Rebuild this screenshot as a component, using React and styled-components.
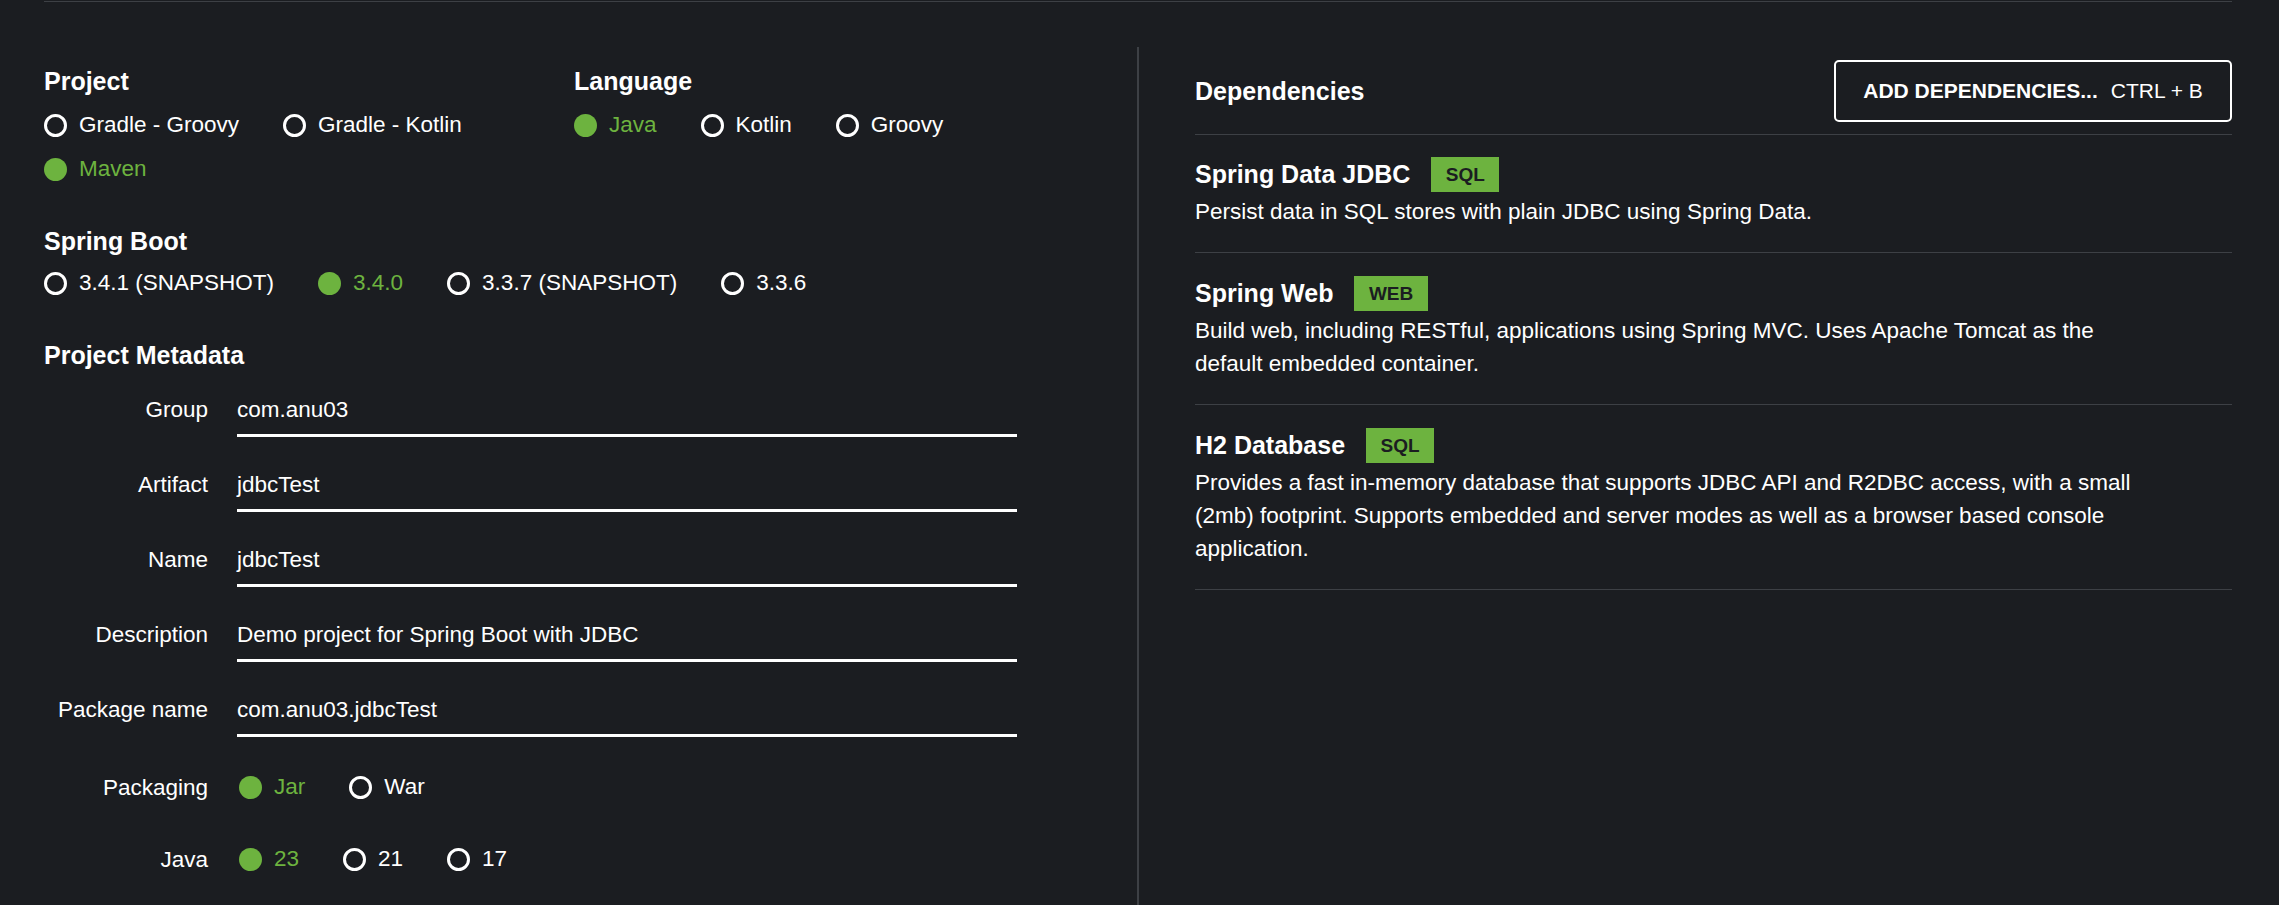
import styled, { createGlobalStyle } from "styled-components";

const GlobalStyle = createGlobalStyle`
  html, body {
    margin: 0;
    padding: 0;
    background: #1b1d21;
  }
  body {
    font-family: "Liberation Sans", Arial, sans-serif;
    color: #fff;
  }
  * {
    box-sizing: border-box;
  }
`

const green = "#6db33f";
const line = "#3d4045";

const Page = styled.div`
  margin: 1px 47px 0 44px;
  border-top: 1px solid ${line};
`

const Columns = styled.div`
  display: grid;
  grid-template-columns: 1093px 1fr;
  margin-top: 45px;
  min-height: 858px;
`

const LeftPanel = styled.div`
  padding-top: 19px;
`

const TopGrid = styled.div`
  display: grid;
  grid-template-columns: 530px 1fr;
`

const Section = styled.section`
  margin-bottom: 40px;
`

const SectionTitle = styled.h2`
  margin: 0 0 ${(p) => p.$gap ?? 12}px;
  font-size: 25px;
  line-height: 30px;
  font-weight: 700;
  color: #fff;
`

const RadioGroup = styled.div`
  display: flex;
  flex-wrap: wrap;
  column-gap: 44px;
  row-gap: 10px;
  padding-left: ${(p) => p.$indent || 0}px;
`

const RadioItem = styled.label`
  display: flex;
  align-items: center;
  gap: 12px;
  height: 34px;
  font-size: 22.5px;
  color: ${(p) => (p.$checked ? green : "#fff")};
  cursor: pointer;
`

const Dot = styled.span`
  width: 23px;
  height: 23px;
  border-radius: 50%;
  flex-shrink: 0;
  background: ${(p) => (p.$checked ? green : "transparent")};
  border: ${(p) => (p.$checked ? "none" : "3px solid #fff")};
`

const FieldRow = styled.div`
  display: grid;
  grid-template-columns: 164px 780px;
  column-gap: 29px;
  align-items: ${(p) => (p.$choice ? "center" : "start")};
  height: ${(p) => (p.$choice ? "38px" : "auto")};
  margin-bottom: ${(p) => (p.$choice ? 34 : 31)}px;
`

const FieldLabel = styled.div`
  text-align: right;
  font-size: 22.5px;
  line-height: 33px;
`

const TextField = styled.div`
  font-size: 22.5px;
  line-height: 33px;
  padding-bottom: 8px;
  border-bottom: 3px solid #fff;
`

const RightPanel = styled.div`
  border-left: 2px solid ${line};
  padding: 13px 0 0 56px;
`

const DepsHeader = styled.div`
  display: flex;
  justify-content: space-between;
  align-items: center;
  height: 62px;
  margin-bottom: 12px;
`

const AddButton = styled.button`
  display: flex;
  align-items: center;
  justify-content: center;
  gap: 13px;
  flex-shrink: 0;
  width: 398px;
  height: 62px;
  padding: 0;
  background: transparent;
  border: 2px solid #fff;
  border-radius: 5px;
  color: #fff;
  font-family: "Liberation Sans", Arial, sans-serif;
  font-size: 21px;
  white-space: nowrap;
  cursor: pointer;

  strong {
    font-weight: 700;
  }
`

const DepItem = styled.div`
  border-top: 1px solid ${line};
  padding: 23px 0 24px;

  ${DepsHeader} + & {
    padding-top: 22px;
  }

  &:last-child {
    border-bottom: 1px solid ${line};
  }
`

const DepTitle = styled.div`
  display: flex;
  align-items: center;
  gap: 21px;
  height: 35px;
  font-size: 25px;
  font-weight: 700;
`

const Badge = styled.span`
  display: inline-flex;
  align-items: center;
  height: 35px;
  padding: 0 14.5px;
  background: ${green};
  color: #1b1d21;
  font-size: 19px;
  font-weight: 700;
`

const DepDesc = styled.p`
  margin: 3px 0 0;
  max-width: 950px;
  font-size: 22.5px;
  line-height: 33px;
`

function Radio({ checked, children }) {
  return (
    <RadioItem $checked={checked}>
      <Dot $checked={checked} />
      {children}
    </RadioItem>
  );
}

const fields = [
  ["Group", "com.anu03"],
  ["Artifact", "jdbcTest"],
  ["Name", "jdbcTest"],
  ["Description", "Demo project for Spring Boot with JDBC"],
  ["Package name", "com.anu03.jdbcTest"],
];

const deps = [
  {
    name: "Spring Data JDBC",
    tag: "SQL",
    text: "Persist data in SQL stores with plain JDBC using Spring Data.",
  },
  {
    name: "Spring Web",
    tag: "WEB",
    text: "Build web, including RESTful, applications using Spring MVC. Uses Apache Tomcat as the default embedded container.",
  },
  {
    name: "H2 Database",
    tag: "SQL",
    text: "Provides a fast in-memory database that supports JDBC API and R2DBC access, with a small (2mb) footprint. Supports embedded and server modes as well as a browser based console application.",
  },
];

export default function App() {
  return (
    <>
      <GlobalStyle />
      <Page>
        <Columns>
          <LeftPanel>
            <TopGrid>
              <Section>
                <SectionTitle>Project</SectionTitle>
                <RadioGroup>
                  <Radio>Gradle - Groovy</Radio>
                  <Radio>Gradle - Kotlin</Radio>
                  <Radio checked>Maven</Radio>
                </RadioGroup>
              </Section>
              <Section>
                <SectionTitle>Language</SectionTitle>
                <RadioGroup>
                  <Radio checked>Java</Radio>
                  <Radio>Kotlin</Radio>
                  <Radio>Groovy</Radio>
                </RadioGroup>
              </Section>
            </TopGrid>

            <Section>
              <SectionTitle $gap={10}>Spring Boot</SectionTitle>
              <RadioGroup>
                <Radio>3.4.1 (SNAPSHOT)</Radio>
                <Radio checked>3.4.0</Radio>
                <Radio>3.3.7 (SNAPSHOT)</Radio>
                <Radio>3.3.6</Radio>
              </RadioGroup>
            </Section>

            <section>
              <SectionTitle $gap={23}>Project Metadata</SectionTitle>
              {fields.map(([label, value]) => (
                <FieldRow key={label}>
                  <FieldLabel>{label}</FieldLabel>
                  <TextField>{value}</TextField>
                </FieldRow>
              ))}
              <FieldRow $choice>
                <FieldLabel>Packaging</FieldLabel>
                <RadioGroup $indent={2}>
                  <Radio checked>Jar</Radio>
                  <Radio>War</Radio>
                </RadioGroup>
              </FieldRow>
              <FieldRow $choice>
                <FieldLabel>Java</FieldLabel>
                <RadioGroup $indent={2}>
                  <Radio checked>23</Radio>
                  <Radio>21</Radio>
                  <Radio>17</Radio>
                </RadioGroup>
              </FieldRow>
            </section>
          </LeftPanel>

          <RightPanel>
            <DepsHeader>
              <SectionTitle $gap={0}>Dependencies</SectionTitle>
              <AddButton>
                <strong>ADD DEPENDENCIES...</strong>
                <span>CTRL + B</span>
              </AddButton>
            </DepsHeader>
            {deps.map((d) => (
              <DepItem key={d.name}>
                <DepTitle>
                  {d.name}
                  <Badge>{d.tag}</Badge>
                </DepTitle>
                <DepDesc>{d.text}</DepDesc>
              </DepItem>
            ))}
          </RightPanel>
        </Columns>
      </Page>
    </>
  );
}
